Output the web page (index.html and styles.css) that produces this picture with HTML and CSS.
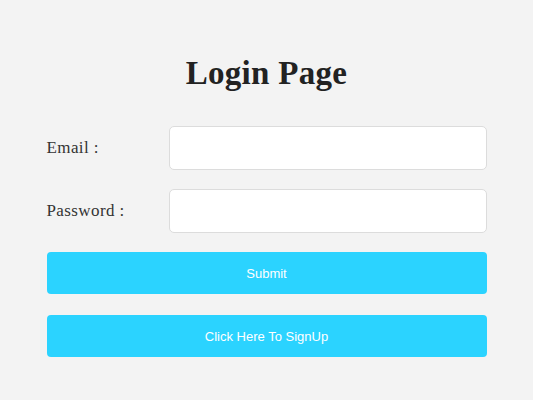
FILE: index.html
```html
<!DOCTYPE html>
<html>
<head>
<meta charset="utf-8">
<link rel="stylesheet" href="styles.css">
</head>
<body>
<div class="login">
  <h1 class="title">Login Page</h1>
  <form class="form">
    <div class="row">
      <label class="label">Email :</label>
      <input class="input" type="text">
    </div>
    <div class="row">
      <label class="label">Password :</label>
      <input class="input" type="password">
    </div>
    <button class="btn btn-submit" type="button">Submit</button>
    <button class="btn btn-signup" type="button">Click Here To SignUp</button>
  </form>
</div>
</body>
</html>
```

FILE: styles.css
```css
html, body {
  margin: 0;
  padding: 0;
  background: #f3f3f3;
}
body {
  font-family: "Liberation Serif", serif;
}
.login {
  width: 440px;
  margin: 0 auto;
  padding-top: 52px;
}
.title {
  margin: 0 0 32px;
  text-align: center;
  font-family: "Liberation Serif", serif;
  font-weight: bold;
  font-size: 33px;
  line-height: 42px;
  color: #222;
  letter-spacing: 0.3px;
}
.form {
  display: flex;
  flex-direction: column;
  gap: 19px;
}
.row {
  display: flex;
  align-items: center;
}
.label {
  width: 122px;
  flex: none;
  font-family: "Liberation Serif", serif;
  font-size: 17px;
  letter-spacing: 0.4px;
  color: #333;
}
.input {
  flex: 1;
  height: 44px;
  box-sizing: border-box;
  border: 1px solid #dcdcdc;
  border-radius: 5px;
  background: #fff;
  margin: 0;
}
.btn {
  height: 42px;
  border: none;
  border-radius: 4px;
  background: #2bd3ff;
  color: #fff;
  font-family: "Liberation Sans", Arial, sans-serif;
  font-size: 13px;
  margin: 0;
}
.btn-signup {
  margin-top: 2px;
}
```
